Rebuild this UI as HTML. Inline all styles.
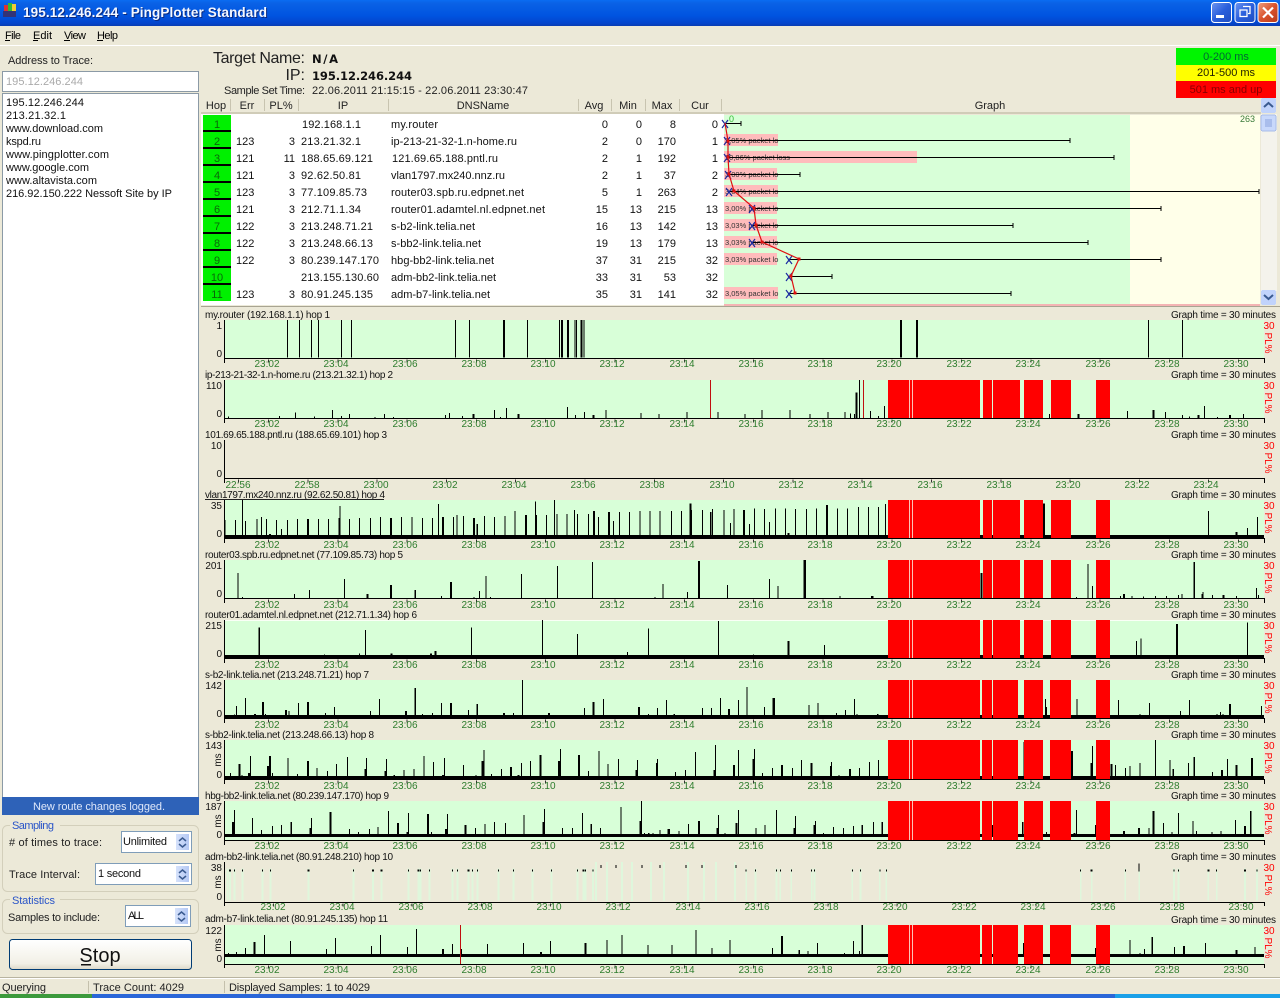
<!DOCTYPE html>
<html><head><meta charset="utf-8"><title>195.12.246.244 - PingPlotter Standard</title>
<style>
html,body{margin:0;padding:0;background:#ece9d8;width:1280px;height:998px;overflow:hidden}
svg{display:block;position:absolute;left:0;top:0;font-family:"Liberation Sans",sans-serif;font-size:11px}
.t{font-size:10px;fill:#111}
.tm{font-size:10px;fill:#2d7d2d;text-anchor:middle}
.r{text-anchor:end}
.m{text-anchor:middle}
.sp{fill:none;stroke:#000;stroke-width:3}
.sb{fill:none;stroke:#000;stroke-width:6}
.pl{font-size:10px;fill:#f00}
.pk{font-size:7.5px;fill:#333}
</style></head><body>
<svg width="1280" height="998" viewBox="0 0 1280 998" shape-rendering="crispEdges">
<defs>
<linearGradient id="tb" x1="0" y1="0" x2="0" y2="1"><stop offset="0" stop-color="#0a6cf2"/><stop offset=".12" stop-color="#0a62e6"/><stop offset=".6" stop-color="#0054e0"/><stop offset=".9" stop-color="#0344cc"/><stop offset="1" stop-color="#0a3cb0"/></linearGradient>
<linearGradient id="bt" x1="0" y1="0" x2="0" y2="1"><stop offset="0" stop-color="#fff"/><stop offset=".8" stop-color="#f2f0e6"/><stop offset="1" stop-color="#dcd8c8"/></linearGradient>
<linearGradient id="wb" x1="0" y1="0" x2="1" y2="1"><stop offset="0" stop-color="#6d95f0"/><stop offset=".5" stop-color="#2a5fdc"/><stop offset="1" stop-color="#1f4dc0"/></linearGradient>
<linearGradient id="wc" x1="0" y1="0" x2="1" y2="1"><stop offset="0" stop-color="#eda080"/><stop offset=".5" stop-color="#d9522c"/><stop offset="1" stop-color="#b83a18"/></linearGradient>
<linearGradient id="sc" x1="0" y1="0" x2="1" y2="0"><stop offset="0" stop-color="#d6e2fb"/><stop offset="1" stop-color="#b4c8f4"/></linearGradient>
</defs>
<!-- title bar -->
<rect width="1280" height="26" fill="url(#tb)"/>
<g><rect x="4" y="5" width="4" height="10" fill="#d33"/><rect x="8" y="3" width="4" height="12" fill="#3b3"/><rect x="12" y="4" width="4" height="9" fill="#ec3"/><rect x="3" y="11" width="13" height="6" fill="#337"/></g>
<g shape-rendering="auto" font-size="13.5" font-weight="bold"><text x="24" y="18" fill="#0a2a80" textLength="244">195.12.246.244 - PingPlotter Standard</text><text x="23" y="17" fill="#f4f8ff" textLength="244">195.12.246.244 - PingPlotter Standard</text></g>
<g shape-rendering="auto">
<rect x="1211.5" y="2.5" width="20" height="20" rx="3" fill="url(#wb)" stroke="#fff"/><rect x="1216" y="15" width="8" height="3" fill="#fff"/>
<rect x="1235" y="2.5" width="20" height="20" rx="3" fill="url(#wb)" stroke="#fff"/><path d="M1243 6.5h7v7h-2M1240 10h7v6.500h-7z" fill="none" stroke="#fff" stroke-width="1.300"/>
<rect x="1258" y="2.500" width="20" height="20" rx="3" fill="url(#wc)" stroke="#fff"/><path d="M1263 7.500l10 10M1273 7.500l-10 10" stroke="#fff" stroke-width="2.200"/>
</g>
<!-- menu -->
<rect y="45" width="1280" height="1" fill="#fff"/>
<g shape-rendering="auto">
<text x="5" y="39" textLength="16">File</text><text x="33" y="39" textLength="19">Edit</text><text x="64" y="39" textLength="22">View</text><text x="97" y="39" textLength="21">Help</text>
<path d="M5 40.500h5M33 40.500h5M64 40.500h6M97 40.500h6" stroke="#000" stroke-width="1"/>
</g>
<!-- left panel -->
<g shape-rendering="auto"><text x="8" y="64" fill="#222" textLength="85">Address to Trace:</text></g>
<rect x="2.500" y="71.500" width="196" height="20" fill="#fff" stroke="#8b9aa6"/>
<text x="6" y="85" fill="#aaa" textLength="77" shape-rendering="auto">195.12.246.244</text>
<rect x="2.500" y="93.500" width="196" height="704" fill="#fff" stroke="#8b9aa6"/>
<g fill="#111" shape-rendering="auto">
<text x="6" y="106" textLength="78">195.12.246.244</text>
<text x="6" y="119" textLength="60">213.21.32.1</text>
<text x="6" y="132" textLength="97">www.download.com</text>
<text x="6" y="145" textLength="35">kspd.ru</text>
<text x="6" y="158" textLength="103">www.pingplotter.com</text>
<text x="6" y="171" textLength="83">www.google.com</text>
<text x="6" y="184" textLength="91">www.altavista.com</text>
<text x="6" y="197" textLength="166">216.92.150.222 Nessoft Site by IP</text>
</g>
<rect x="2" y="797" width="197" height="18" fill="#2e62b8"/>
<text x="99" y="810" fill="#dfe8fa" class="m" textLength="132" shape-rendering="auto">New route changes logged.</text>
<g fill="none" stroke="#d3cfbb" shape-rendering="auto">
<rect x="2.500" y="825.500" width="196" height="66" rx="5"/>
<rect x="2.500" y="899.500" width="196" height="34" rx="5"/>
</g>
<rect x="10" y="820" width="50" height="10" fill="#ece9d8"/><rect x="10" y="895" width="50" height="10" fill="#ece9d8"/>
<g shape-rendering="auto">
<text x="12" y="829" fill="#2a55c8" textLength="42">Sampling</text>
<text x="12" y="904" fill="#2a55c8" textLength="43">Statistics</text>
<text x="9" y="846" textLength="93" fill="#222"># of times to trace:</text>
<text x="9" y="878" textLength="71" fill="#222">Trace Interval:</text>
<text x="8" y="921" textLength="92" fill="#222">Samples to include:</text>
</g>
<g fill="#fff" stroke="#7f9db9">
<rect x="121.500" y="831.500" width="70" height="21"/><rect x="95.500" y="863.500" width="96" height="21"/><rect x="125.500" y="905.500" width="65" height="21"/>
</g>
<g shape-rendering="auto" fill="#111">
<text x="123" y="845" textLength="44">Unlimited</text><text x="98" y="877" textLength="43">1 second</text><text x="128" y="919" textLength="16">ALL</text>
</g>
<g fill="url(#sc)"><rect x="176" y="834" width="13" height="16"/><rect x="176" y="866" width="13" height="16"/><rect x="175" y="908" width="13" height="16"/></g>
<g fill="none" stroke="#3a5a90" stroke-width="1.500" shape-rendering="auto">
<path d="M179 841l3.500-3 3.500 3M179 844l3.500 3 3.500-3M179 873l3.500-3 3.500 3M179 876l3.500 3 3.500-3M178 915l3.500-3 3.500 3M178 918l3.500 3 3.500-3"/>
</g>
<rect x="9.500" y="939.500" width="182" height="30" rx="3" fill="url(#bt)" stroke="#003c74" shape-rendering="auto"/>
<text x="100" y="962" class="m" font-size="20" fill="#111" shape-rendering="auto">Stop</text><rect x="81" y="964" width="10" height="1.500" fill="#111"/>
<!-- target info -->
<g shape-rendering="auto">
<text x="305" y="63" class="r" font-size="16" fill="#222" textLength="92">Target Name:</text>
<text x="305" y="80" class="r" font-size="16" fill="#222">IP:</text>
<text x="305" y="94" class="r" fill="#222" textLength="81">Sample Set Time:</text>
<text x="312" y="63" font-family="DejaVu Sans" font-weight="bold" font-size="11.500" fill="#111" textLength="26">N/A</text>
<text x="312" y="80" font-family="DejaVu Sans" font-weight="bold" font-size="11.500" fill="#111" textLength="100">195.12.246.244</text>
<text x="312" y="94" fill="#222" textLength="216">22.06.2011 21:15:15 - 22.06.2011 23:30:47</text>
</g>
<!-- legend -->
<rect x="1176" y="48" width="100" height="17" fill="#00f500"/><rect x="1176" y="65" width="100" height="16" fill="#ffff00"/><rect x="1176" y="81" width="100" height="17" fill="#f00"/>
<g shape-rendering="auto" class="m" text-anchor="middle"><text x="1226" y="60" fill="#063">0-200 ms</text><text x="1226" y="76" fill="#220">201-500 ms</text><text x="1226" y="93" fill="#800">501 ms and up</text></g>
<!-- table header -->
<g fill="#222" text-anchor="middle" shape-rendering="auto">
<text x="216" y="109">Hop</text><text x="247" y="109">Err</text><text x="281" y="109">PL%</text><text x="343" y="109">IP</text><text x="483" y="109">DNSName</text><text x="594" y="109">Avg</text><text x="628" y="109">Min</text><text x="662" y="109">Max</text><text x="700" y="109">Cur</text><text x="990" y="109">Graph</text>
</g>
<path d="M230.500 99v12M264.500 99v12M298.500 99v12M388.500 99v12M578.500 99v12M611.500 99v12M645.500 99v12M679.500 99v12M721.500 99v12" stroke="#c8c4b0"/>
<rect x="201" y="112" width="1060" height="2" fill="#d0ccb8"/>
<!-- table -->
<rect x="201" y="114" width="523" height="191" fill="#fff"/>
<rect x="724" y="115" width="406" height="190" fill="#d8ffd8"/><rect x="1130" y="115" width="130" height="190" fill="#ffffe9"/>
<rect x="724" y="304" width="536" height="2" fill="#f4b4b4"/><rect x="201" y="306" width="1079" height="1" fill="#a8a492"/>
<g fill="#00f000">
<rect x="203" y="115" width="28" height="15"/><rect x="203" y="132" width="28" height="15"/><rect x="203" y="149" width="28" height="15"/><rect x="203" y="166" width="28" height="15"/><rect x="203" y="183" width="28" height="15"/><rect x="203" y="200" width="28" height="15"/><rect x="203" y="217" width="28" height="15"/><rect x="203" y="234" width="28" height="15"/><rect x="203" y="251" width="28" height="15"/><rect x="203" y="268" width="28" height="15"/><rect x="203" y="285" width="28" height="16"/>
</g>
<g fill="#000">
<rect x="203" y="130" width="28" height="2"/><rect x="203" y="147" width="28" height="2"/><rect x="203" y="164" width="28" height="2"/><rect x="203" y="181" width="28" height="2"/><rect x="203" y="198" width="28" height="2"/><rect x="203" y="215" width="28" height="2"/><rect x="203" y="232" width="28" height="2"/><rect x="203" y="249" width="28" height="2"/><rect x="203" y="266" width="28" height="2"/><rect x="203" y="283" width="28" height="2"/>
</g>
<g shape-rendering="auto" fill="#111">
<g fill="#0a660a" text-anchor="middle"><text x="217" y="128">1</text><text x="217" y="145">2</text><text x="217" y="162">3</text><text x="217" y="179">4</text><text x="217" y="196">5</text><text x="217" y="213">6</text><text x="217" y="230">7</text><text x="217" y="247">8</text><text x="217" y="264">9</text><text x="217" y="281">10</text><text x="217" y="298">11</text></g>
<g><text x="236" y="145">123</text><text x="236" y="162">121</text><text x="236" y="179">121</text><text x="236" y="196">123</text><text x="236" y="213">121</text><text x="236" y="230">122</text><text x="236" y="247">122</text><text x="236" y="264">122</text><text x="236" y="298">123</text></g>
<g text-anchor="end"><text x="295" y="145">3</text><text x="295" y="162">11</text><text x="295" y="179">3</text><text x="295" y="196">3</text><text x="295" y="213">3</text><text x="295" y="230">3</text><text x="295" y="247">3</text><text x="295" y="264">3</text><text x="295" y="298">3</text></g>
<g><text x="302" y="128" textLength="59">192.168.1.1</text><text x="301" y="145" textLength="60">213.21.32.1</text><text x="301" y="162" textLength="72">188.65.69.121</text><text x="301" y="179" textLength="60">92.62.50.81</text><text x="301" y="196" textLength="66">77.109.85.73</text><text x="301" y="213" textLength="60">212.71.1.34</text><text x="301" y="230" textLength="72">213.248.71.21</text><text x="301" y="247" textLength="72">213.248.66.13</text><text x="301" y="264" textLength="78">80.239.147.170</text><text x="301" y="281" textLength="78">213.155.130.60</text><text x="301" y="298" textLength="72">80.91.245.135</text></g>
<g><text x="391" y="128" textLength="47">my.router</text><text x="391" y="145" textLength="126">ip-213-21-32-1.n-home.ru</text><text x="392" y="162" textLength="106">121.69.65.188.pntl.ru</text><text x="391" y="179" textLength="114">vlan1797.mx240.nnz.ru</text><text x="391" y="196" textLength="133">router03.spb.ru.edpnet.net</text><text x="391" y="213" textLength="154">router01.adamtel.nl.edpnet.net</text><text x="391" y="230" textLength="84">s-b2-link.telia.net</text><text x="391" y="247" textLength="90">s-bb2-link.telia.net</text><text x="391" y="264" textLength="103">hbg-bb2-link.telia.net</text><text x="391" y="281" textLength="105">adm-bb2-link.telia.net</text><text x="391" y="298" textLength="99">adm-b7-link.telia.net</text></g>
<g text-anchor="end"><text x="608" y="128">0</text><text x="608" y="145">2</text><text x="608" y="162">2</text><text x="608" y="179">2</text><text x="608" y="196">5</text><text x="608" y="213">15</text><text x="608" y="230">16</text><text x="608" y="247">19</text><text x="608" y="264">37</text><text x="608" y="281">33</text><text x="608" y="298">35</text>
<text x="642" y="128">0</text><text x="642" y="145">0</text><text x="642" y="162">1</text><text x="642" y="179">1</text><text x="642" y="196">1</text><text x="642" y="213">13</text><text x="642" y="230">13</text><text x="642" y="247">13</text><text x="642" y="264">31</text><text x="642" y="281">31</text><text x="642" y="298">31</text>
<text x="676" y="128">8</text><text x="676" y="145">170</text><text x="676" y="162">192</text><text x="676" y="179">37</text><text x="676" y="196">263</text><text x="676" y="213">215</text><text x="676" y="230">142</text><text x="676" y="247">179</text><text x="676" y="264">215</text><text x="676" y="281">53</text><text x="676" y="298">141</text>
<text x="718" y="128">0</text><text x="718" y="145">1</text><text x="718" y="162">1</text><text x="718" y="179">2</text><text x="718" y="196">2</text><text x="718" y="213">13</text><text x="718" y="230">13</text><text x="718" y="247">13</text><text x="718" y="264">32</text><text x="718" y="281">32</text><text x="718" y="298">32</text></g>
</g>
<!-- trace graph -->
<g fill="#ffbcbc"><rect x="724" y="134" width="54" height="12"/><rect x="724" y="151" width="193" height="12"/><rect x="724" y="168" width="53" height="12"/><rect x="724" y="185" width="54" height="12"/><rect x="724" y="202" width="53" height="12"/><rect x="724" y="219" width="53" height="12"/><rect x="724" y="236" width="53" height="12"/><rect x="724" y="253" width="53" height="12"/><rect x="724" y="287" width="54" height="12"/></g>
<g class="pk" shape-rendering="auto"><text x="725" y="143">3,05% packet lo</text><text x="725" y="160">10,86% packet loss</text><text x="725" y="177">3,00% packet lo</text><text x="725" y="194">3,04% packet lo</text><text x="725" y="211">3,00% packet lo</text><text x="725" y="228">3,03% packet lo</text><text x="725" y="245">3,03% packet lo</text><text x="725" y="262">3,03% packet lo</text><text x="725" y="296">3,05% packet lo</text></g>
<path d="M726 123.500H741M741 121v5M726 140.500H1070M1070 138v5M726 157.500H1114M1114 155v5M727 174.500H800M800 172v5M728 191.500H1259M1259 189v5M751 208.500H1161M1161 206v5M751 225.500H1013M1013 223v5M751 242.500H1088M1088 240v5M788 259.500H1161M1161 257v5M788 276.500H832M832 274v5M788 293.500H1011M1011 291v5" stroke="#000" fill="none"/>
<g shape-rendering="auto">
<path d="M722 120l3 4-3 4M728 120l-3 4 3 4M724 137l3 4-3 4M730 137l-3 4 3 4M724 154l3 4-3 4M730 154l-3 4 3 4M725 171l3 4-3 4M731 171l-3 4 3 4M726 188l3 4-3 4M732 188l-3 4 3 4M749 205l3 4-3 4M755 205l-3 4 3 4M749 222l3 4-3 4M755 222l-3 4 3 4M749 239l3 4-3 4M755 239l-3 4 3 4M786 256l3 4-3 4M792 256l-3 4 3 4M786 273l3 4-3 4M792 273l-3 4 3 4M786 290l3 4-3 4M792 290l-3 4 3 4" stroke="#1a2aa0" fill="none" stroke-width="1.200"/>
<path d="M725 123L728 141 728 157 729 174 734 191 754 208 756 225 762 242 799 259 791 276 795 293" fill="none" stroke="#e01010" stroke-width="1.200"/>
<path d="M726.500 139.500h3v3h-3zM726.500 155.500h3v3h-3zM727.500 172.500h3v3h-3zM732.500 189.500h3v3h-3zM752.500 206.500h3v3h-3zM754.500 223.500h3v3h-3zM760.500 240.500h3v3h-3zM797.500 257.500h3v3h-3zM789.500 274.500h3v3h-3zM793.500 291.500h3v3h-3z" fill="#e01010"/>
<text x="729" y="122" font-size="9" fill="#3b3">0</text><text x="1240" y="122" font-size="9" fill="#3a7a3a">263</text>
</g>
<!-- scrollbar -->
<rect x="1261" y="114" width="16" height="177" fill="#f4f3ec"/>
<rect x="1261" y="98" width="15" height="15" rx="2" fill="#c1d3fb"/><path d="M1264 107l4.500-4 4.500 4" fill="none" stroke="#3a5a90" stroke-width="2" shape-rendering="auto"/>
<rect x="1261" y="115" width="15" height="16" rx="2" fill="#c8d8fb" stroke="#a8bce8"/><path d="M1265 120h7M1265 122h7M1265 124h7M1265 126h7" stroke="#8aa2dc"/>
<rect x="1261" y="290" width="15" height="15" rx="2" fill="#c1d3fb"/><path d="M1264 295l4.500 4 4.500-4" fill="none" stroke="#3a5a90" stroke-width="2" shape-rendering="auto"/>

<!-- graph backgrounds -->
<g fill="#d8ffd8">
<rect x="224" y="320" width="1040" height="38"/><rect x="224" y="380" width="1040" height="38"/><rect x="224" y="500" width="1040" height="38"/><rect x="224" y="560" width="1040" height="38"/><rect x="224" y="620" width="1040" height="38"/><rect x="224" y="680" width="1040" height="38"/><rect x="224" y="740" width="1040" height="39"/><rect x="224" y="801" width="1040" height="39"/><rect x="224" y="925" width="1040" height="39"/>
</g>
<rect x="224" y="620" width="1040" height="1" fill="#fafff6"/>
<!-- row 10 pale bars -->
<g transform="translate(200 850) scale(.3333)" fill="none" stroke="#dff7dc" stroke-width="6">
<path d="M83 55V152M90 55V152M103 55V152M127 55V152M187 55V152M211 55V152M325 55V152M460 55V152M519 55V152M544 55V152M625 55V152M655 55V152M661 55V152M688 55V152M757 55V152M772 55V152M806 55V152M817 55V152M832 55V152M895 55V152M940 55V152M997 55V152M1054 55V152M1132 55V152M1150 55V152M1157 55V152M1179 55V152"/>
</g>
<path d="M596 862V901M607 862V901M622 862V901M632 862V901M651 862V901M664 862V901M688 862V901M704 862V901M716 862V901M735 862V901" stroke="#dff7dc" stroke-width="2" fill="none"/>
<g transform="translate(740 850) scale(.3444 .3333)" fill="none" stroke="#dff7dc" stroke-width="5">
<path d="M18 55V152M45 55V152M106 55V152M117 55V152M149 55V152M208 55V152M216 55V152M326 55V152M350 55V152M406 55V152M425 55V152M989 55V152M1021 55V152M1119 55V152M1159 55V152M1260 55V152M1273 55V152M1360 55V152M1384 55V152M1466 55V152M1501 55V152"/>
</g>
<!-- thick baselines -->
<g fill="#000"><rect x="224" y="535" width="1040" height="3"/><rect x="224" y="655" width="1040" height="3"/><rect x="224" y="715" width="1040" height="3"/><rect x="224" y="776" width="1040" height="3"/><rect x="224" y="834" width="1040" height="3"/><rect x="224" y="954" width="1040" height="3"/></g>

<!-- row 1-2 left -->
<g transform="translate(200 305) scale(.3333)">
<path class="sp" d="M262 158V45M298 158V45M334 158V45M355 158V45M424 158V45M454 158V45M766 158V45M808 158V45M982 158V45M1079 158V45M1125 158V45M1152 158V45M1130 158V45"/>
<path class="sb" d="M912 158V45M1086 158V45M1104 158V45M1144 158V45"/>
<path class="sp" d="M85 340V335M238 340V333M286 340V322M343 340V334M397 340V315M424 340V333M448 340V327M525 340V336M553 340V327M580 340V336M737 340V330M748 340V324M787 340V333M883 340V315M901 340V336M919 340V309M1102 340V306M1126 340V330M1153 340V321"/>
<path class="sb" d="M820 340V327M955 340V327M1180 340V330"/>
</g>
<path d="M606 418V410M641 418V413M659 418V414M687 418V412M718 418V412M745 418V414M762 418V410M790 418V410M810 418V414M828 418V412M845 418V412" stroke="#000" fill="none"/>
<rect x="710" y="380" width="1" height="38" fill="#c01010"/>
<!-- row 1-2 right -->
<g transform="translate(850 305) scale(.3333)">
<path class="sp" d="M895 158V45M997 158V45"/><path class="sb" d="M153 158V45M201 158V45"/>
<path class="sp" d="M2 340V325M14 340V327M28 340V225M61 340V318M85 340V333M103 340V303M598 340V327M832 340V318M946 340V321M997 340V330M1018 340V334M1063 340V303M1102 340V336M1180 340V327"/>
<path class="sb" d="M20 340V262M686 340V327M910 340V315M1045 340V330M1140 340V330"/>
<path d="M40 340V225" stroke="#c01010" stroke-width="3" fill="none"/>
</g>

<!-- rows 4-5 left -->
<g transform="translate(200 425) scale(.3444 .3333)">
<path class="sp" d="M72 335V285M103 335V285M123 335V225M132 335V288M165 335V282M178 335V276M193 335V282M222 335V285M236 335V312M254 335V285M283 335V282M344 335V282M373 335V282M407 335V243M434 335V282M463 335V279M495 335V279M524 335V276M585 335V276M615 335V276M646 335V279M675 335V279M692 335V237M736 335V276M746 335V270M765 335V273M805 335V297M826 335V273M855 335V276M885 335V273M915 335V258M974 335V230M977 335V270M1006 335V270M1029 335V225M1037 335V267M1066 335V267M1087 335V255M1096 335V267M1128 335V267M1157 335V276M1200 335V288M1218 335V261M1247 335V261M1278 335V258M1307 335V258M1336 335V258M1369 335V258M1398 335V258M1459 335V255M1483 335V261M1488 335V252M1521 335V255M1540 335V294M1551 335V252"/>
<path class="sb" d="M313 335V282M405 335V279M555 335V279M706 335V276M796 335V279M946 335V270M1144 335V258M1188 335V261M1426 335V255M1424 335V235M203 335V327"/>
<path class="sp" d="M111 520V444M123 520V516M275 520V507M318 520V495M419 520V462M625 520V495M701 520V513M796 520V516M811 520V498M831 520V453M843 520V516M933 520V447M1038 520V423M1139 520V411M1321 520V516M1345 520V477M1415 520V501M1531 520V480"/>
<path class="sb" d="M486 520V507M555 520V480M729 520V471M1449 520V408"/>
</g>
<!-- rows 4-5 right -->
<g transform="translate(740 425) scale(.3444 .3333)">
<path class="sp" d="M27 335V297M42 335V250M71 335V252M85 335V291M103 335V250M132 335V250M161 335V252M193 335V252M222 335V250M283 335V250M312 335V250M344 335V246M373 335V246M402 335V246M422 335V237M1360 335V258M1473 335V309M1502 335V276"/>
<path class="sb" d="M12 335V255M141 335V324M252 335V240M882 335V235M1442 335V321"/>
<path class="sp" d="M85 520V462M111 520V483M290 520V513M977 520V516M1011 520V417M1023 520V483M1105 520V513M1138 520V513M1172 520V515M1206 520V513M1239 520V513M1273 520V510M1284 520V507M1319 520V411M1341 520V507M1345 520V501M1372 520V510M1442 520V513M1500 520V489M1505 520V510"/>
<path class="sb" d="M188 520V405M384 520V513M701 520V444M1115 520V507M1404 520V510"/>
</g>
<!-- rows 6-9 left -->
<g transform="translate(200 610) scale(.3444 .3333)">
<path class="sp" d="M132 140V136M172 140V52M277 140V136M361 140V133M448 140V136M463 140V130M480 140V60M788 140V52M994 140V30M1096 140V72M1241 140V126M1302 140V55M1355 140V136M1505 140V33"/>
<path class="sb" d="M556 140V130M671 140V130M684 140V123"/>
<path class="sp" d="M100 318V313M106 318V288M132 318V264M190 318V312M259 318V303M286 318V279M364 318V309M390 318V291M495 318V303M521 318V267M625 318V234M646 318V312M675 318V309M701 318V279M779 318V300M805 318V282M910 318V309M936 318V210M1117 318V294M1171 318V267M1302 318V312M1328 318V294M1355 318V270M1377 318V312M1459 318V294M1485 318V294M1511 318V264M1564 318V270"/>
<path class="sb" d="M160 318V312M183 318V276M250 318V300M314 318V276M598 318V303M729 318V279M883 318V309M1013 318V309M1143 318V276M1275 318V291M1536 318V297"/>
<path class="sp" d="M88 500V489M122 500V495M146 500V438M210 500V489M256 500V444M283 500V492M340 500V474M370 500V483M396 500V462M428 500V441M483 500V444M541 500V447M564 500V495M592 500V480M622 500V477M651 500V438M678 500V456M710 500V444M765 500V465M802 500V495M824 500V420M847 500V492M876 500V477M933 500V459M959 500V453M1047 500V417M1128 500V483M1158 500V423M1184 500V462M1215 500V447M1271 500V450M1329 500V447M1381 500V486M1410 500V480M1439 500V426M1497 500V405M1564 500V420"/>
<path class="sb" d="M115 500V462M143 500V489M198 500V468M203 500V438M314 500V453M480 500V477M539 500V483M706 500V495M821 500V453M903 500V471M925 500V495M989 500V435M1043 500V453M1100 500V435M1268 500V480M1327 500V459M1494 500V480M1550 500V465"/>
<path class="sp" d="M100 675V600M152 675V624M178 675V660M210 675V648M236 675V645M265 675V636M324 675V624M434 675V657M460 675V666M492 675V657M517 675V651M547 675V603M605 675V609M672 675V666M718 675V612M800 675V654M828 675V642M855 675V636M887 675V639M941 675V615M1000 675V597M1052 675V654M1081 675V654M1110 675V609M1136 675V642M1163 675V654M1222 675V648M1223 675V591M1282 675V573M1290 675V669M1303 675V669M1315 675V669M1335 675V660M1391 675V663M1418 675V642M1505 675V615M1525 675V669M1564 675V600"/>
<path class="sb" d="M96 675V636M321 675V654M379 675V606M575 675V639M603 675V666M662 675V612M715 675V657M771 675V645M997 675V636M1279 675V633M1361 675V657M1449 675V633M1503 675V654M1558 675V639"/>
</g>
<!-- rows 6-9 right -->
<g transform="translate(740 610) scale(.3444 .3333)">
<path class="sp" d="M39 140V133M112 140V136M122 140V136M172 140V136M245 140V105M262 140V136M312 140V136M1151 140V93M1165 140V85M1282 140V136M1473 140V37"/>
<path class="sb" d="M141 140V93M1269 140V42"/>
<path class="sp" d="M21 318V231M71 318V291M201 318V285M227 318V279M280 318V309M306 318V300M332 318V267M340 318V312M400 318V312M887 318V267M979 318V267M1099 318V270M1162 318V312M1189 318V279M1279 318V303M1305 318V270M1385 318V312M1395 318V306M1403 318V312M1514 318V288"/>
<path class="sb" d="M98 318V264M493 318V285M889 318V291M1423 318V282"/>
<path class="sp" d="M42 500V417M65 500V489M95 500V474M153 500V474M179 500V450M266 500V456M288 500V495M347 500V474M376 500V456M402 500V450M824 500V396M1023 500V408M1090 500V465M1120 500V474M1133 500V468M1162 500V459M1206 500V390M1249 500V450M1258 500V477M1302 500V459M1319 500V441M1372 500V486M1415 500V447"/>
<path class="sb" d="M40 500V447M122 500V465M208 500V459M264 500V468M320 500V477M964 500V423M1021 500V459M1079 500V462M1399 500V480M1442 500V465M1487 500V444"/>
<path class="sp" d="M47 675V654M73 675V645M106 675V600M161 675V618M219 675V633M242 675V669M271 675V651M300 675V654M329 675V648M355 675V645M387 675V636M413 675V636M733 675V645M821 675V636M890 675V666M977 675V600M1032 675V645M1187 675V654M1229 675V639M1255 675V666M1273 675V609M1316 675V633M1326 675V663M1370 675V666M1396 675V663M1439 675V630M1483 675V603"/>
<path class="sb" d="M159 675V654M217 675V645M499 675V630M971 675V669M1115 675V663M1159 675V654M1201 675V603M1466 675V648"/>
</g>
<!-- rows 10-11 left -->
<g transform="translate(200 850) scale(.3333)">
<path class="sp" d="M103 58V64M127 58V64M187 58V64M211 58V64M460 58V64M625 58V64M661 58V64M688 58V64M757 58V64M772 58V64M817 58V64M832 58V64M895 58V64M940 58V64M997 58V64M1054 58V64M1132 58V64M1157 58V64M1179 58V64"/>
<path class="sb" d="M90 58V64M325 58V64M519 58V64M544 58V64M655 58V64M806 58V64M1150 58V64"/>
<path class="sp" d="M85 315V309M109 315V306M136 315V294M193 315V255M271 315V273M379 315V297M406 315V264M514 315V288M541 315V255M622 315V291M649 315V237M757 315V282M784 315V297M862 315V282M970 315V279M1051 315V273"/>
<path class="sb" d="M163 315V276M729 315V297M1023 315V306M1157 315V279"/>
<path d="M781 343V225" stroke="#c01010" stroke-width="3" fill="none"/>
</g>
<path d="M607 955V940M622 955V935M648 955V945M672 955V945M696 955V930M712 955V948M730 955V940M601 865v3M616 865v3M642 865v3M660 865v3M686 865v3M702 865v3M736 865v3" stroke="#000" fill="none"/>
<!-- rows 10-11 right -->
<g transform="translate(740 850) scale(.3444 .3333)">
<path class="sp" d="M18 58V64M45 58V64M106 58V64M117 58V64M149 58V64M208 58V64M216 58V64M326 58V64M350 58V64M406 58V64M425 58V64M989 58V64M1119 58V64M1159 40V64M1260 58V64M1273 58V64M1384 58V64M1501 58V64"/>
<path class="sb" d="M1021 58V64M1360 58V64M1466 58V64"/>
<path class="sp" d="M94 315V294M172 315V300M198 315V303M225 315V279M303 315V309M329 315V273M347 315V303M355 315V225M823 315V279M1032 315V294M1133 315V270M1162 315V309M1174 315V297M1197 315V261M1261 315V291M1351 315V279M1496 315V291"/>
<path class="sb" d="M122 315V258M493 315V273M1289 315V288M1442 315V300"/>
</g>
<!-- red blocks -->
<g fill="#fcc4b8"><rect x="909" y="380" width="4" height="38"/><rect x="909" y="500" width="4" height="38"/><rect x="909" y="560" width="4" height="38"/><rect x="909" y="620" width="4" height="38"/><rect x="909" y="680" width="4" height="38"/><rect x="909" y="740" width="4" height="39"/><rect x="909" y="801" width="4" height="39"/><rect x="909" y="925" width="4" height="39"/></g>
<g fill="#f00">
<path d="M888 380h21v38h-21zM910 380h2v38h-2zM913 380h67v38h-67zM983 380h9v38h-9zM993 380h27v38h-27zM1024 380h19v38h-19zM1051 380h20v38h-20zM1096 380h14v38h-14z"/>
<path d="M888 500h21v38h-21zM910 500h2v38h-2zM913 500h67v38h-67zM983 500h9v38h-9zM993 500h27v38h-27zM1024 500h19v38h-19zM1051 500h20v38h-20zM1096 500h14v38h-14z"/>
<path d="M888 560h21v38h-21zM910 560h2v38h-2zM913 560h67v38h-67zM983 560h9v38h-9zM993 560h27v38h-27zM1024 560h19v38h-19zM1051 560h20v38h-20zM1096 560h14v38h-14z"/>
<path d="M888 620h21v38h-21zM910 620h2v38h-2zM913 620h67v38h-67zM983 620h9v38h-9zM993 620h27v38h-27zM1024 620h19v38h-19zM1051 620h20v38h-20zM1096 620h14v38h-14z"/>
<path d="M888 680h21v38h-21zM910 680h2v38h-2zM913 680h67v38h-67zM982 680h10v38h-10zM993 680h25v38h-25zM1024 680h19v38h-19zM1050 680h21v38h-21zM1096 680h14v38h-14z"/>
<path d="M888 740h21v39h-21zM910 740h2v39h-2zM913 740h67v39h-67zM982 740h10v39h-10zM993 740h25v39h-25zM1024 740h19v39h-19zM1050 740h21v39h-21zM1096 740h14v39h-14z"/>
<path d="M888 801h21v39h-21zM910 801h2v39h-2zM913 801h67v39h-67zM982 801h10v39h-10zM993 801h25v39h-25zM1024 801h19v39h-19zM1050 801h21v39h-21zM1096 801h14v39h-14z"/>
<path d="M888 925h21v39h-21zM910 925h2v39h-2zM913 925h67v39h-67zM982 925h10v39h-10zM993 925h25v39h-25zM1024 925h19v39h-19zM1050 925h21v39h-21zM1096 925h14v39h-14z"/>
</g>
<!-- axes -->
<path d="M224.500 320V363M1264.500 358V363M224 358.500H1264M224.500 380V423M1264.500 418V423M224 418.500H1264M224.500 440V483M1264.500 478V483M224 478.500H1264M224.500 500V543M1264.500 538V543M224 538.500H1264M224.500 560V603M1264.500 598V603M224 598.500H1264M224.500 620V663M1264.500 658V663M224 658.500H1264M224.500 680V723M1264.500 718V723M224 718.500H1264M224.500 740V784M1264.500 779V784M224 779.500H1264M224.500 801V845M1264.500 840V845M224 840.500H1264M224.500 862V906M1264.500 902V906M224 902.500H1264M224.500 925V968M1264.500 964V968M224 964.500H1264" stroke="#000" fill="none"/>
<g stroke="#333" stroke-width="3" stroke-dasharray="1 68.3" fill="none">
<path d="M268 361H1264M268 421H1264M238 481H1264M268 541H1264M268 601H1264M268 661H1264M268 721H1264M268 782H1264M268 843H1264M273 905H1264M268 967H1264"/>
</g>
<!-- titles -->
<g class="t" shape-rendering="auto">
<text x="205" y="318" textLength="125">my.router (192.168.1.1) hop 1</text>
<text x="205" y="378" textLength="188">ip-213-21-32-1.n-home.ru (213.21.32.1) hop 2</text>
<text x="205" y="438" textLength="182">101.69.65.188.pntl.ru (188.65.69.101) hop 3</text>
<text x="205" y="498" textLength="180">vlan1797.mx240.nnz.ru (92.62.50.81) hop 4</text>
<text x="205" y="558" textLength="198">router03.spb.ru.edpnet.net (77.109.85.73) hop 5</text>
<text x="205" y="618" textLength="212">router01.adamtel.nl.edpnet.net (212.71.1.34) hop 6</text>
<text x="205" y="678" textLength="164">s-b2-link.telia.net (213.248.71.21) hop 7</text>
<text x="205" y="738" textLength="169">s-bb2-link.telia.net (213.248.66.13) hop 8</text>
<text x="205" y="799" textLength="184">hbg-bb2-link.telia.net (80.239.147.170) hop 9</text>
<text x="205" y="860" textLength="188">adm-bb2-link.telia.net (80.91.248.210) hop 10</text>
<text x="205" y="922" textLength="183">adm-b7-link.telia.net (80.91.245.135) hop 11</text>
</g>
<rect x="205" y="499" width="179" height="1" fill="#222"/>
<g class="t r" shape-rendering="auto" text-anchor="end">
<text x="1276" y="318" textLength="105">Graph time = 30 minutes</text><text x="1276" y="378" textLength="105">Graph time = 30 minutes</text><text x="1276" y="438" textLength="105">Graph time = 30 minutes</text><text x="1276" y="498" textLength="105">Graph time = 30 minutes</text><text x="1276" y="558" textLength="105">Graph time = 30 minutes</text><text x="1276" y="618" textLength="105">Graph time = 30 minutes</text><text x="1276" y="678" textLength="105">Graph time = 30 minutes</text><text x="1276" y="738" textLength="105">Graph time = 30 minutes</text><text x="1276" y="799" textLength="105">Graph time = 30 minutes</text><text x="1276" y="860" textLength="105">Graph time = 30 minutes</text><text x="1276" y="923" textLength="105">Graph time = 30 minutes</text>
</g>
<!-- y labels -->
<g class="t" text-anchor="end" shape-rendering="auto">
<text x="222" y="329">1</text><text x="222" y="357">0</text>
<text x="222" y="389">110</text><text x="222" y="417">0</text>
<text x="222" y="449">10</text><text x="222" y="477">0</text>
<text x="222" y="509">35</text><text x="222" y="537">0</text>
<text x="222" y="569">201</text><text x="222" y="597">0</text>
<text x="222" y="629">215</text><text x="222" y="657">0</text>
<text x="222" y="689">142</text><text x="222" y="717">0</text>
<text x="222" y="749">143</text><text x="222" y="778">0</text>
<text x="222" y="810">187</text><text x="222" y="838">0</text>
<text x="222" y="871">38</text><text x="222" y="900">0</text>
<text x="222" y="934">122</text><text x="222" y="962">0</text>
</g>
<g class="t" text-anchor="middle" shape-rendering="auto">
<text transform="translate(221 760) rotate(-90)">ms</text><text transform="translate(221 821) rotate(-90)">ms</text><text transform="translate(221 882) rotate(-90)">ms</text><text transform="translate(221 945) rotate(-90)">ms</text>
</g>
<!-- PL -->
<g class="pl" text-anchor="middle" shape-rendering="auto">
<text x="1269" y="329">30</text><text transform="translate(1265 343) rotate(90)">PL%</text>
<text x="1269" y="389">30</text><text transform="translate(1265 403) rotate(90)">PL%</text>
<text x="1269" y="449">30</text><text transform="translate(1265 463) rotate(90)">PL%</text>
<text x="1269" y="509">30</text><text transform="translate(1265 523) rotate(90)">PL%</text>
<text x="1269" y="569">30</text><text transform="translate(1265 583) rotate(90)">PL%</text>
<text x="1269" y="629">30</text><text transform="translate(1265 643) rotate(90)">PL%</text>
<text x="1269" y="689">30</text><text transform="translate(1265 703) rotate(90)">PL%</text>
<text x="1269" y="749">30</text><text transform="translate(1265 763) rotate(90)">PL%</text>
<text x="1269" y="810">30</text><text transform="translate(1265 824) rotate(90)">PL%</text>
<text x="1269" y="871">30</text><text transform="translate(1265 885) rotate(90)">PL%</text>
<text x="1269" y="934">30</text><text transform="translate(1265 948) rotate(90)">PL%</text>
</g>
<!-- time labels -->
<g class="tm" shape-rendering="auto" text-anchor="middle">
<text y="367"><tspan x="267">23:02</tspan><tspan x="336">23:04</tspan><tspan x="405">23:06</tspan><tspan x="474">23:08</tspan><tspan x="543">23:10</tspan><tspan x="612">23:12</tspan><tspan x="682">23:14</tspan><tspan x="751">23:16</tspan><tspan x="820">23:18</tspan><tspan x="889">23:20</tspan><tspan x="959">23:22</tspan><tspan x="1028">23:24</tspan><tspan x="1098">23:26</tspan><tspan x="1167">23:28</tspan><tspan x="1236">23:30</tspan></text>
<text y="427"><tspan x="267">23:02</tspan><tspan x="336">23:04</tspan><tspan x="405">23:06</tspan><tspan x="474">23:08</tspan><tspan x="543">23:10</tspan><tspan x="612">23:12</tspan><tspan x="682">23:14</tspan><tspan x="751">23:16</tspan><tspan x="820">23:18</tspan><tspan x="889">23:20</tspan><tspan x="959">23:22</tspan><tspan x="1028">23:24</tspan><tspan x="1098">23:26</tspan><tspan x="1167">23:28</tspan><tspan x="1236">23:30</tspan></text>
<text y="488"><tspan x="238">22:56</tspan><tspan x="307">22:58</tspan><tspan x="376">23:00</tspan><tspan x="445">23:02</tspan><tspan x="514">23:04</tspan><tspan x="583">23:06</tspan><tspan x="652">23:08</tspan><tspan x="722">23:10</tspan><tspan x="791">23:12</tspan><tspan x="860">23:14</tspan><tspan x="930">23:16</tspan><tspan x="999">23:18</tspan><tspan x="1068">23:20</tspan><tspan x="1137">23:22</tspan><tspan x="1206">23:24</tspan></text>
<text y="548"><tspan x="267">23:02</tspan><tspan x="336">23:04</tspan><tspan x="405">23:06</tspan><tspan x="474">23:08</tspan><tspan x="543">23:10</tspan><tspan x="612">23:12</tspan><tspan x="682">23:14</tspan><tspan x="751">23:16</tspan><tspan x="820">23:18</tspan><tspan x="889">23:20</tspan><tspan x="959">23:22</tspan><tspan x="1028">23:24</tspan><tspan x="1098">23:26</tspan><tspan x="1167">23:28</tspan><tspan x="1236">23:30</tspan></text>
<text y="608"><tspan x="267">23:02</tspan><tspan x="336">23:04</tspan><tspan x="405">23:06</tspan><tspan x="474">23:08</tspan><tspan x="543">23:10</tspan><tspan x="612">23:12</tspan><tspan x="682">23:14</tspan><tspan x="751">23:16</tspan><tspan x="820">23:18</tspan><tspan x="889">23:20</tspan><tspan x="959">23:22</tspan><tspan x="1028">23:24</tspan><tspan x="1098">23:26</tspan><tspan x="1167">23:28</tspan><tspan x="1236">23:30</tspan></text>
<text y="668"><tspan x="267">23:02</tspan><tspan x="336">23:04</tspan><tspan x="405">23:06</tspan><tspan x="474">23:08</tspan><tspan x="543">23:10</tspan><tspan x="612">23:12</tspan><tspan x="682">23:14</tspan><tspan x="751">23:16</tspan><tspan x="820">23:18</tspan><tspan x="889">23:20</tspan><tspan x="959">23:22</tspan><tspan x="1028">23:24</tspan><tspan x="1098">23:26</tspan><tspan x="1167">23:28</tspan><tspan x="1236">23:30</tspan></text>
<text y="728"><tspan x="267">23:02</tspan><tspan x="336">23:04</tspan><tspan x="405">23:06</tspan><tspan x="474">23:08</tspan><tspan x="543">23:10</tspan><tspan x="612">23:12</tspan><tspan x="682">23:14</tspan><tspan x="751">23:16</tspan><tspan x="820">23:18</tspan><tspan x="889">23:20</tspan><tspan x="959">23:22</tspan><tspan x="1028">23:24</tspan><tspan x="1098">23:26</tspan><tspan x="1167">23:28</tspan><tspan x="1236">23:30</tspan></text>
<text y="789"><tspan x="267">23:02</tspan><tspan x="336">23:04</tspan><tspan x="405">23:06</tspan><tspan x="474">23:08</tspan><tspan x="543">23:10</tspan><tspan x="612">23:12</tspan><tspan x="682">23:14</tspan><tspan x="751">23:16</tspan><tspan x="820">23:18</tspan><tspan x="889">23:20</tspan><tspan x="959">23:22</tspan><tspan x="1028">23:24</tspan><tspan x="1098">23:26</tspan><tspan x="1167">23:28</tspan><tspan x="1236">23:30</tspan></text>
<text y="849"><tspan x="267">23:02</tspan><tspan x="336">23:04</tspan><tspan x="405">23:06</tspan><tspan x="474">23:08</tspan><tspan x="543">23:10</tspan><tspan x="612">23:12</tspan><tspan x="682">23:14</tspan><tspan x="751">23:16</tspan><tspan x="820">23:18</tspan><tspan x="889">23:20</tspan><tspan x="959">23:22</tspan><tspan x="1028">23:24</tspan><tspan x="1098">23:26</tspan><tspan x="1167">23:28</tspan><tspan x="1236">23:30</tspan></text>
<text y="910"><tspan x="273">23:02</tspan><tspan x="342">23:04</tspan><tspan x="411">23:06</tspan><tspan x="480">23:08</tspan><tspan x="549">23:10</tspan><tspan x="618">23:12</tspan><tspan x="688">23:14</tspan><tspan x="757">23:16</tspan><tspan x="826">23:18</tspan><tspan x="895">23:20</tspan><tspan x="964">23:22</tspan><tspan x="1033">23:24</tspan><tspan x="1103">23:26</tspan><tspan x="1172">23:28</tspan><tspan x="1241">23:30</tspan></text>
<text y="973"><tspan x="267">23:02</tspan><tspan x="336">23:04</tspan><tspan x="405">23:06</tspan><tspan x="474">23:08</tspan><tspan x="543">23:10</tspan><tspan x="612">23:12</tspan><tspan x="682">23:14</tspan><tspan x="751">23:16</tspan><tspan x="820">23:18</tspan><tspan x="889">23:20</tspan><tspan x="959">23:22</tspan><tspan x="1028">23:24</tspan><tspan x="1098">23:26</tspan><tspan x="1167">23:28</tspan><tspan x="1236">23:30</tspan></text>
</g>
<!-- status bar -->
<rect y="977" width="1280" height="1" fill="#b8b4a0"/><rect y="978" width="1280" height="1" fill="#fff"/>
<path d="M88.500 981v12M224.500 981v12" stroke="#c4c0ac"/>
<g shape-rendering="auto" fill="#222"><text x="2" y="991" textLength="44">Querying</text><text x="93" y="991" textLength="91">Trace Count: 4029</text><text x="229" y="991" textLength="141">Displayed Samples: 1 to 4029</text></g>
<rect y="994" width="1280" height="4" fill="#2a66d8"/><rect y="994" width="92" height="4" fill="#3c9a3c"/><rect x="1115" y="994" width="165" height="4" fill="#1aa0e8"/>
</svg>
</body></html>
